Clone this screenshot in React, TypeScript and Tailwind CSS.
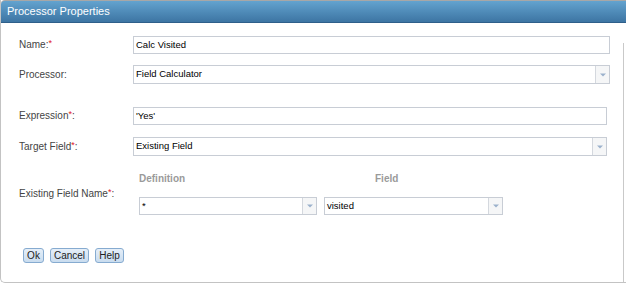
import React from 'react';

const font = { fontFamily: '"Liberation Sans", Arial, sans-serif' };

const Req = () => <span className="text-[#e0141e] text-[9px] relative -top-[2px]">*</span>;

const Arrow = () => (
  <div className="w-[14px] h-full border-l border-[#d4d8de] bg-[#f5f6f7] flex items-center justify-center">
    <svg width="6" height="4" viewBox="0 0 6 4">
      <path d="M0 0.5 H6 L3 3.5 Z" fill="#9bb1cc" />
    </svg>
  </div>
);

interface BoxProps {
  value: string;
  width: string;
  height?: string;
  select?: boolean;
}

const Box: React.FC<BoxProps> = ({ value, width, height = 'h-[18px]', select }) => (
  <div className={`${width} ${height} border border-[#c8cdd5] bg-white flex items-stretch`}>
    <div className="flex-1 flex items-center pl-[2px] text-[9.5px] text-black">{value}</div>
    {select && <Arrow />}
  </div>
);

const Label: React.FC<{ children: React.ReactNode }> = ({ children }) => (
  <div className="w-[114px] text-[10px] text-[#444]">{children}</div>
);

const Button: React.FC<{ children: React.ReactNode; w: string }> = ({ children, w }) => (
  <button
    className={`${w} h-[15px] rounded-[3px] border border-[#86abd0] bg-gradient-to-b from-[#e6eff8] to-[#c9dcef] text-[10px] text-[#222] flex items-center justify-center leading-none`}
  >
    {children}
  </button>
);

export default function App() {
  return (
    <div className="w-[626px] h-[286px] bg-white overflow-hidden" style={font}>
      <div className="w-[626px] h-[283px] flex flex-col border-l border-b border-[#c3c3c3] rounded-bl-[5px]">
        {/* Title bar */}
        <div className="h-[23px] border-t border-[#a7a7a7] border-b border-b-[#2e5f8a] bg-gradient-to-b from-[#63a3cf] to-[#3d75a3] rounded-tl-[4px] flex items-center pl-[6px] text-white text-[11px]">
          Processor Properties
        </div>

        <div className="flex-1 flex">
          <div className="flex-1 flex flex-col pl-[18px]">
            <div className="flex items-center mt-[13px]">
              <Label>Name:<Req /></Label>
              <Box value="Calc Visited" width="w-[477px]" />
            </div>

            <div className="flex items-center mt-[11px]">
              <Label>Processor:</Label>
              <Box value="Field Calculator" width="w-[477px]" height="h-[19px]" select />
            </div>

            <div className="flex items-center mt-[23px]">
              <Label>Expression<Req />:</Label>
              <Box value="'Yes'" width="w-[474px]" />
            </div>

            <div className="flex items-center mt-[12px]">
              <Label>Target Field<Req />:</Label>
              <Box value="Existing Field" width="w-[474px]" height="h-[19px]" select />
            </div>

            <div className="flex items-center mt-[16px]">
              <Label>Existing Field Name<Req />:</Label>
              <div className="flex flex-col pl-[6px]">
                <div className="flex h-[12px] items-center text-[10px] font-bold text-[#9a9a9a]">
                  <span className="w-[236px]">Definition</span>
                  <span>Field</span>
                </div>
                <div className="flex gap-[7px] mt-[13px]">
                  <Box value="*" width="w-[178px]" select />
                  <Box value="visited" width="w-[179px]" select />
                </div>
              </div>
            </div>

            <div className="flex gap-[6px] mt-[33px] pl-[4px]">
              <Button w="w-[21px]">Ok</Button>
              <Button w="w-[39px]">Cancel</Button>
              <Button w="w-[29px]">Help</Button>
            </div>
          </div>
          <div className="w-px mt-[20px] bg-[#c9c9c9] mr-[2px]" />
        </div>
      </div>
    </div>
  );
}
